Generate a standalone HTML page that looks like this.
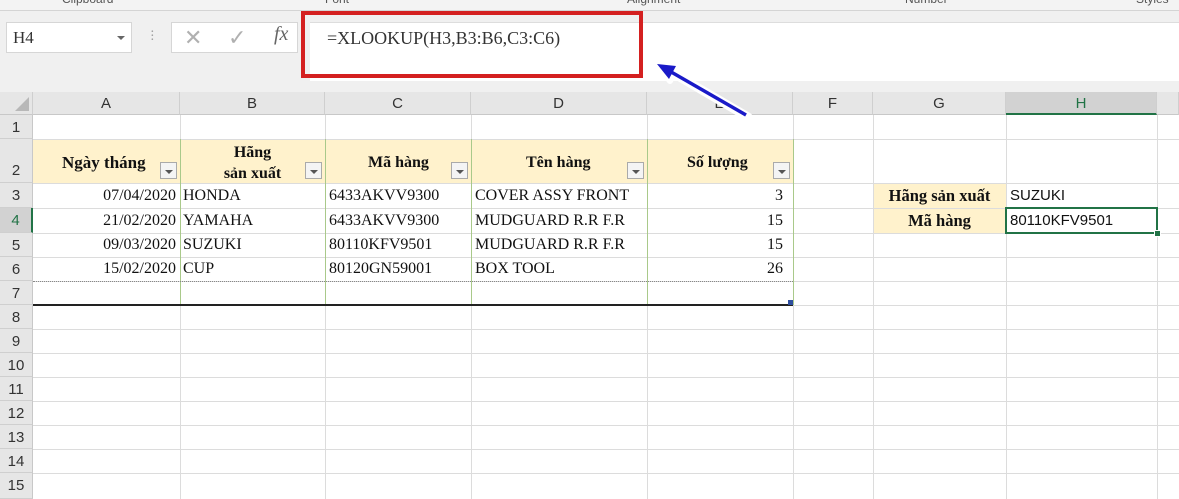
<!DOCTYPE html><html><head><style>
body{margin:0;width:1179px;height:499px;overflow:hidden;background:#fff;font-family:"Liberation Serif",serif;position:relative}
.a{position:absolute}
.ch{position:absolute;top:92px;height:23px;background:#e6e6e6;border-right:1px solid #cfcfcf;font:15px "Liberation Sans",sans-serif;color:#333;text-align:center;line-height:24px;box-sizing:border-box;border-bottom:1px solid #c8c8c8}
.rh{position:absolute;left:0;width:33px;background:#e6e6e6;border-bottom:1px solid #cfcfcf;font:15px "Liberation Sans",sans-serif;color:#333;text-align:center;box-sizing:border-box;border-right:1px solid #c8c8c8}
.vl{position:absolute;top:115px;height:384px;width:1px;background:#dcdcdc}
.hl{position:absolute;left:33px;right:0;height:1px;background:#dcdcdc}
.t{position:absolute;font-size:16px;color:#111;white-space:nowrap}
.b{font-weight:bold}
.dd{position:absolute;width:17px;height:17px;border:1px solid #aaa;background:#f4f4f4;box-sizing:border-box}
.dd:after{content:"";position:absolute;left:4px;top:7px;border-left:4px solid transparent;border-right:4px solid transparent;border-top:4px solid #555}
</style></head><body>
<div class="a" style="left:0;top:0;width:1179px;height:10px;background:#f3f3f3;border-bottom:1px solid #d4d4d4;font:12px 'Liberation Sans',sans-serif;color:#555;overflow:hidden">
<span class="a" style="left:62px;top:-8px">Clipboard</span><span class="a" style="left:325px;top:-8px">Font</span><span class="a" style="left:627px;top:-8px">Alignment</span><span class="a" style="left:905px;top:-8px">Number</span><span class="a" style="left:1136px;top:-8px">Styles</span></div>
<div class="a" style="left:0;top:11px;width:1179px;height:81px;background:#f0f0f0"></div>
<div class="a" style="left:6px;top:22px;width:126px;height:31px;background:#fff;border:1px solid #d6d6d6;box-sizing:border-box;font:17px 'Liberation Serif',serif;line-height:30px;padding-left:6px;color:#333">H4<span class="a" style="right:6px;top:13px;border-left:4px solid transparent;border-right:4px solid transparent;border-top:4px solid #666"></span></div>
<div class="a" style="left:150px;top:31px;color:#999;font-size:14px;line-height:4px">·<br>·<br>·</div>
<div class="a" style="left:171px;top:22px;width:127px;height:31px;background:#fff;border:1px solid #d6d6d6;box-sizing:border-box;color:#b0b0b0;font:22px 'Liberation Sans',sans-serif;line-height:30px"><span class="a" style="left:12px">✕</span><span class="a" style="left:56px">✓</span><span class="a" style="left:102px;font:italic 20px 'Liberation Serif',serif;color:#666">fx</span></div>
<div class="a" style="left:310px;top:22px;width:869px;height:58px;background:#fff;border-top:1px solid #ddd"></div>
<div class="a" style="left:301px;top:11px;width:342px;height:67px;border:4px solid #d42020;box-sizing:border-box"></div>
<div class="t" style="left:327px;top:28px;font-size:18px;color:#333">=XLOOKUP(H3,B3:B6,C3:C6)</div>
<div class="ch" style="left:0;width:33px;background:#e6e6e6"><span class="a" style="right:3px;bottom:3px;border-left:14px solid transparent;border-bottom:14px solid #b8b8b8"></span></div>
<div class="ch" style="left:33px;width:147px">A</div><div class="ch" style="left:180px;width:145px">B</div><div class="ch" style="left:325px;width:146px">C</div><div class="ch" style="left:471px;width:176px">D</div><div class="ch" style="left:647px;width:146px">E</div><div class="ch" style="left:793px;width:80px">F</div><div class="ch" style="left:873px;width:133px">G</div><div class="ch" style="left:1006px;width:151px;background:#d2d2d2;border-bottom:2px solid #217346;color:#217346">H</div><div class="ch" style="left:1157px;width:22px"></div>
<svg class="a" style="left:648px;top:55px;z-index:5" width="110" height="70"><path d="M100 62 L18 14" stroke="#fff" stroke-width="9" stroke-linecap="round"/><path d="M8 8 L30 10 L22 26Z" fill="#fff" stroke="#fff" stroke-width="6" stroke-linejoin="round"/><path d="M98 60 L18 14" stroke="#1a1ac8" stroke-width="3.5"/><path d="M9 9 L28 11 L21 24Z" fill="#1a1ac8"/></svg>
<div class="rh" style="top:115px;height:24px;line-height:26px">1</div>
<div class="rh" style="top:139px;height:44px;line-height:64px">2</div>
<div class="rh" style="top:183px;height:25px;line-height:26px">3</div>
<div class="rh" style="top:208px;height:25px;line-height:26px;background:#d2d2d2;border-right:2px solid #217346;color:#217346">4</div>
<div class="rh" style="top:233px;height:24px;line-height:26px">5</div>
<div class="rh" style="top:257px;height:24px;line-height:26px">6</div>
<div class="rh" style="top:281px;height:24px;line-height:26px">7</div>
<div class="rh" style="top:305px;height:24px;line-height:26px">8</div>
<div class="rh" style="top:329px;height:24px;line-height:26px">9</div>
<div class="rh" style="top:353px;height:24px;line-height:26px">10</div>
<div class="rh" style="top:377px;height:24px;line-height:26px">11</div>
<div class="rh" style="top:401px;height:24px;line-height:26px">12</div>
<div class="rh" style="top:425px;height:24px;line-height:26px">13</div>
<div class="rh" style="top:449px;height:24px;line-height:26px">14</div>
<div class="rh" style="top:473px;height:26px;line-height:26px">15</div>
<div class="a" style="left:33px;top:139px;width:760px;height:44px;background:#fff2cc"></div>
<div class="a" style="left:873px;top:183px;width:133px;height:50px;background:#fff2cc"></div>
<div class="hl" style="top:139px"></div><div class="hl" style="top:183px"></div><div class="hl" style="top:208px"></div><div class="hl" style="top:233px"></div><div class="hl" style="top:257px"></div><div class="hl" style="top:281px"></div><div class="hl" style="top:329px"></div><div class="hl" style="top:353px"></div><div class="hl" style="top:377px"></div><div class="hl" style="top:401px"></div><div class="hl" style="top:425px"></div><div class="hl" style="top:449px"></div><div class="hl" style="top:473px"></div><div class="hl" style="top:305px"></div>
<div class="vl" style="left:180px"></div><div class="vl" style="left:325px"></div><div class="vl" style="left:471px"></div><div class="vl" style="left:647px"></div><div class="vl" style="left:793px"></div><div class="vl" style="left:873px"></div><div class="vl" style="left:1006px"></div><div class="vl" style="left:1157px"></div>
<div class="a" style="left:180px;top:139px;width:1px;height:166px;background:#a9c98a"></div><div class="a" style="left:325px;top:139px;width:1px;height:166px;background:#a9c98a"></div><div class="a" style="left:471px;top:139px;width:1px;height:166px;background:#a9c98a"></div><div class="a" style="left:647px;top:139px;width:1px;height:166px;background:#a9c98a"></div><div class="a" style="left:793px;top:139px;width:1px;height:166px;background:#a9c98a"></div>
<div class="a" style="left:33px;top:281px;width:760px;border-top:1px dotted #888"></div>
<div class="a" style="left:33px;top:304px;width:760px;height:2px;background:#222"></div>
<div class="a" style="left:788px;top:300px;width:5px;height:5px;background:#2f4f9f"></div>
<div class="t b" style="left:62px;top:153px;font-size:17px">Ngày tháng</div>
<div class="t b" style="left:180px;width:145px;top:142px;font-size:16px;text-align:center;line-height:21px">Hãng<br>sản xuất</div>
<div class="t b" style="left:368px;top:154px;font-size:16px">Mã hàng</div>
<div class="t b" style="left:526px;top:154px;font-size:16px">Tên hàng</div>
<div class="t b" style="left:687px;top:154px;font-size:16px">Số lượng</div>
<div class="dd" style="left:160px;top:162px"></div><div class="dd" style="left:305px;top:162px"></div><div class="dd" style="left:451px;top:162px"></div><div class="dd" style="left:627px;top:162px"></div><div class="dd" style="left:773px;top:162px"></div>
<div class="t" style="left:33px;width:143px;text-align:right;top:187px">07/04/2020</div><div class="t" style="left:183px;top:187px">HONDA</div><div class="t" style="left:329px;top:187px">6433AKVV9300</div><div class="t" style="left:475px;top:187px">COVER ASSY FRONT</div><div class="t" style="left:647px;width:136px;text-align:right;top:187px">3</div>
<div class="t" style="left:33px;width:143px;text-align:right;top:212px">21/02/2020</div><div class="t" style="left:183px;top:212px">YAMAHA</div><div class="t" style="left:329px;top:212px">6433AKVV9300</div><div class="t" style="left:475px;top:212px">MUDGUARD R.R F.R</div><div class="t" style="left:647px;width:136px;text-align:right;top:212px">15</div>
<div class="t" style="left:33px;width:143px;text-align:right;top:236px">09/03/2020</div><div class="t" style="left:183px;top:236px">SUZUKI</div><div class="t" style="left:329px;top:236px">80110KFV9501</div><div class="t" style="left:475px;top:236px">MUDGUARD R.R F.R</div><div class="t" style="left:647px;width:136px;text-align:right;top:236px">15</div>
<div class="t" style="left:33px;width:143px;text-align:right;top:260px">15/02/2020</div><div class="t" style="left:183px;top:260px">CUP</div><div class="t" style="left:329px;top:260px">80120GN59001</div><div class="t" style="left:475px;top:260px">BOX TOOL</div><div class="t" style="left:647px;width:136px;text-align:right;top:260px">26</div>
<div class="t b" style="left:873px;width:133px;text-align:center;top:186px;font-size:16.5px">Hãng sản xuất</div>
<div class="t b" style="left:873px;width:133px;text-align:center;top:211px;font-size:16.5px">Mã hàng</div>
<div class="t" style="left:1010px;top:187px;font:15px 'Liberation Sans',sans-serif">SUZUKI</div>
<div class="t" style="left:1010px;top:212px;font:15px 'Liberation Sans',sans-serif">80110KFV9501</div>
<div class="a" style="left:1005px;top:207px;width:153px;height:27px;border:2px solid #217346;box-sizing:border-box"></div>
<div class="a" style="left:1154px;top:230px;width:5px;height:5px;background:#217346;border:1px solid #fff"></div>
</body></html>
